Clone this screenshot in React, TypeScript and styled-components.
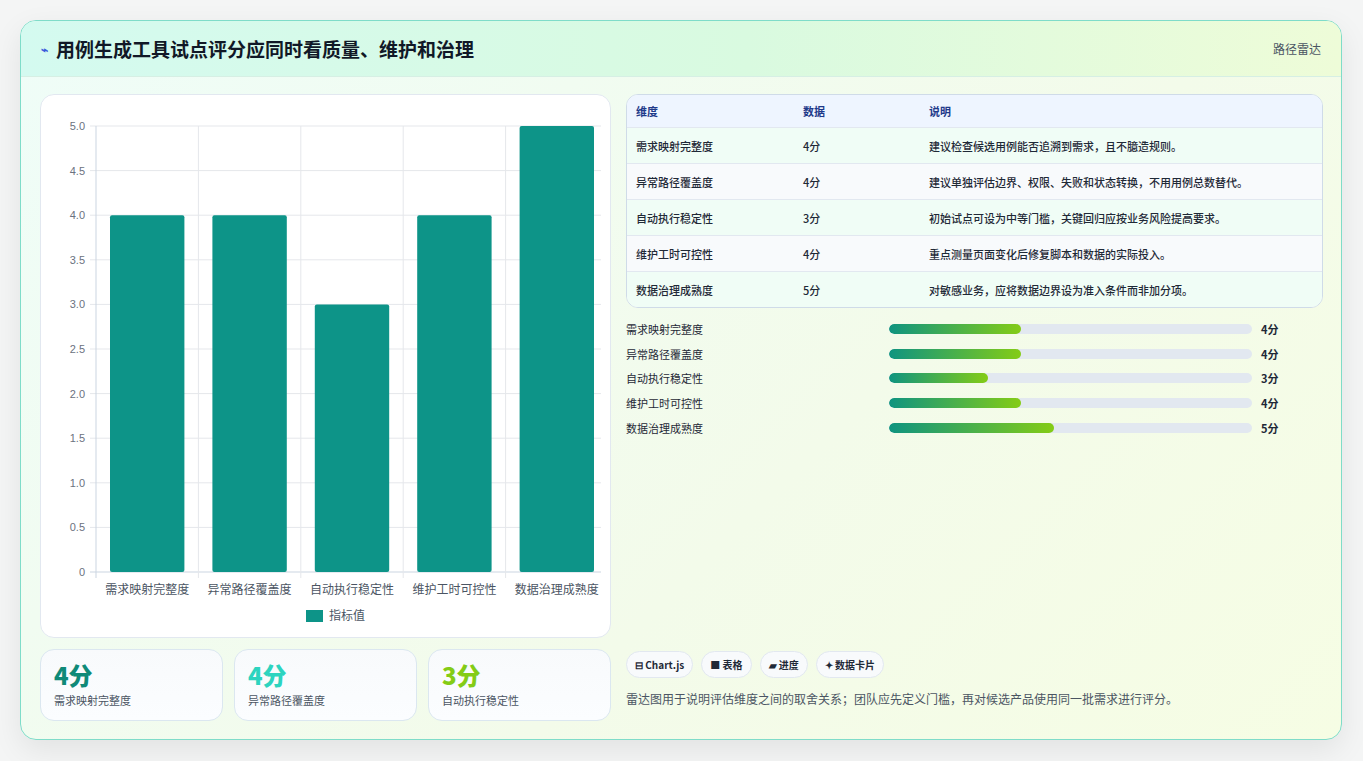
import styled, { createGlobalStyle } from "styled-components";

const GlobalStyle = createGlobalStyle`
  html, body { margin: 0; padding: 0; background: #f4f5f5; }
  body { font-family: "Noto Sans CJK SC", "Noto Sans", sans-serif; color: #1f2937; }
`;

const Page = styled.div`
  padding: 20px 21px 20px 20px;
  height: 761px;
  box-sizing: border-box;
`;

const Card = styled.div`
  height: 720px;
  box-sizing: border-box;
  border: 1px solid #7fdcc9;
  border-radius: 16px;
  background: linear-gradient(135deg, #effdf8 0%, #f3fbea 60%, #f6fde4 100%);
  box-shadow: 0 10px 30px rgba(0, 0, 0, 0.08);
  display: flex;
  flex-direction: column;
  overflow: hidden;
`;

const Header = styled.div`
  height: 55px;
  flex-shrink: 0;
  display: flex;
  align-items: center;
  justify-content: space-between;
  padding: 0 20px;
  background: linear-gradient(90deg, #d4faf0 0%, #d9fae0 55%, #eefcd8 100%);
  border-bottom: 1px solid #d6efe4;
`;

const Title = styled.h1`
  margin: 0;
  font-size: 19px;
  font-weight: 700;
  color: #111827;
  display: flex;
  align-items: center;
  gap: 8px;
`;

const Bolt = styled.span`
  color: #3b5bdb;
  font-size: 12px;
`;

const Tag = styled.span`
  font-size: 12px;
  color: #4b5563;
`;

const Body = styled.div`
  flex: 1;
  display: grid;
  grid-template-columns: 571px 1fr;
  gap: 15px;
  padding: 17px 18px 18px 19px;
  min-height: 0;
`;

const Col = styled.div`
  display: flex;
  flex-direction: column;
  gap: 11px;
  min-height: 0;
`;

const ChartCard = styled.div`
  flex: 1;
  background: #fff;
  border: 1px solid #e2e8f0;
  border-radius: 14px;
  padding: 8px 10px 10px 10px;
`;

const Stats = styled.div`
  display: grid;
  grid-template-columns: repeat(3, 1fr);
  gap: 11px;
  height: 74px;
`;

const Stat = styled.div`
  background: linear-gradient(180deg, #f8fafc, #fbfdff);
  border: 1px solid #dbe7f0;
  border-radius: 14px;
  padding: 10px 13px;
`;

const StatValue = styled.div<{ $color: string }>`
  font-size: 24px;
  font-weight: 800;
  color: ${(p) => p.$color};
  line-height: 30px;
`;

const StatLabel = styled.div`
  font-size: 11px;
  color: #4b5563;
  margin-top: 2px;
`;

const Table = styled.div`
  border: 1px solid #cfdbe8;
  border-radius: 12px;
  overflow: hidden;
  background: #fff;
`;

const Row = styled.div<{ $head?: boolean; $alt?: boolean }>`
  display: grid;
  grid-template-columns: 167px 126px 1fr;
  align-items: center;
  padding: 0 9px;
  height: ${(p) => (p.$head ? "32px" : "35px")};
  font-size: 11px;
  font-weight: ${(p) => (p.$head ? 600 : 500)};
  color: ${(p) => (p.$head ? "#1e3a8a" : "#1f2937")};
  background: ${(p) => (p.$head ? "#eef5ff" : p.$alt ? "#f8fafc" : "#f0fdf6")};
  border-top: ${(p) => (p.$head ? "none" : "1px solid #e2e8f0")};
`;

const Bars = styled.div`
  display: flex;
  flex-direction: column;
  margin-top: 9px;
`;

const BarRow = styled.div`
  display: grid;
  grid-template-columns: 263px 363px 1fr;
  align-items: center;
  gap: 0;
  height: 24.6px;
  font-size: 11px;
`;

const Track = styled.div`
  height: 10px;
  border-radius: 5px;
  background: #e2e8f0;
  overflow: hidden;
`;

const Fill = styled.div`
  height: 100%;
  border-radius: 5px;
  background: linear-gradient(90deg, #0f9480, #84cc16);
`;

const BarValue = styled.span`
  font-weight: 700;
  padding-left: 9px;
`;

const Spacer = styled.div`
  flex: 1;
`;

const Chips = styled.div`
  display: flex;
  gap: 8px;
`;

const Chip = styled.span`
  font-size: 10px;
  font-weight: 600;
  color: #1f2937;
  background: #f8fafc;
  border: 1px solid #e2e8f0;
  border-radius: 14px;
  padding: 5px 8px;
`;

const Note = styled.p`
  margin: 12px 0 14px;
  font-size: 12px;
  color: #4b5563;
`;

const rows = [
  { name: "需求映射完整度", v: 4, desc: "建议检查候选用例能否追溯到需求，且不臆造规则。" },
  { name: "异常路径覆盖度", v: 4, desc: "建议单独评估边界、权限、失败和状态转换，不用用例总数替代。" },
  { name: "自动执行稳定性", v: 3, desc: "初始试点可设为中等门槛，关键回归应按业务风险提高要求。" },
  { name: "维护工时可控性", v: 4, desc: "重点测量页面变化后修复脚本和数据的实际投入。" },
  { name: "数据治理成熟度", v: 5, desc: "对敏感业务，应将数据边界设为准入条件而非加分项。" },
];

const Chart = () => {
  const x0 = 45, x1 = 557, yTop = 23, yBot = 469;
  const cw = (x1 - x0) / 5;
  const ticks = [0, 0.5, 1, 1.5, 2, 2.5, 3, 3.5, 4, 4.5, 5];
  const y = (v: number) => yBot - (v / 5) * (yBot - yTop);
  return (
    <svg width="550" height="524" style={{ display: "block" }}>
      {ticks.map((t) => (
        <g key={t}>
          <line x1={x0 - 6} x2={x1} y1={y(t)} y2={y(t)} stroke={t === 0 ? "#cbd5e1" : "#e5e7eb"} />
          <text x={x0 - 11} y={y(t) + 4} fontSize="11" fill="#6b7280" textAnchor="end" fontFamily="Liberation Sans, sans-serif">
            {t === 0 ? "0" : t.toFixed(1)}
          </text>
        </g>
      ))}
      {[0, 1, 2, 3, 4, 5].map((i) => (
        <line key={i} x1={x0 + i * cw} x2={x0 + i * cw} y1={yTop} y2={yBot + 6} stroke={i === 0 ? "#cbd5e1" : "#e5e7eb"} />
      ))}
      {rows.map((r, i) => (
        <g key={r.name}>
          <rect x={x0 + i * cw + 14} y={y(r.v)} width={cw - 28} height={yBot - y(r.v)} rx="2" fill="#0d9488" />
          <text x={x0 + i * cw + cw / 2} y={yBot + 22} fontSize="12" fill="#4b5563" textAnchor="middle">
            {r.name}
          </text>
        </g>
      ))}
      <rect x="255" y="507" width="17" height="12" fill="#0d9488" />
      <text x="278" y="517" fontSize="12" fill="#4b5563">指标值</text>
    </svg>
  );
};

export default function App() {
  return (
    <>
      <GlobalStyle />
      <Page>
        <Card>
          <Header>
            <Title>
              <Bolt>⌁</Bolt>用例生成工具试点评分应同时看质量、维护和治理
            </Title>
            <Tag>路径雷达</Tag>
          </Header>
          <Body>
            <Col>
              <ChartCard>
                <Chart />
              </ChartCard>
              <Stats>
                <Stat>
                  <StatValue $color="#0f8a78">4分</StatValue>
                  <StatLabel>需求映射完整度</StatLabel>
                </Stat>
                <Stat>
                  <StatValue $color="#2dd4bf">4分</StatValue>
                  <StatLabel>异常路径覆盖度</StatLabel>
                </Stat>
                <Stat>
                  <StatValue $color="#84cc16">3分</StatValue>
                  <StatLabel>自动执行稳定性</StatLabel>
                </Stat>
              </Stats>
            </Col>
            <Col style={{ gap: 0 }}>
              <Table>
                <Row $head>
                  <span>维度</span>
                  <span>数据</span>
                  <span>说明</span>
                </Row>
                {rows.map((r, i) => (
                  <Row key={r.name} $alt={i % 2 === 1}>
                    <span>{r.name}</span>
                    <span>{r.v}分</span>
                    <span>{r.desc}</span>
                  </Row>
                ))}
              </Table>
              <Bars>
                {rows.map((r) => (
                  <BarRow key={r.name}>
                    <span>{r.name}</span>
                    <Track>
                      <Fill style={{ width: `${(r.v / 11) * 100}%` }} />
                    </Track>
                    <BarValue>{r.v}分</BarValue>
                  </BarRow>
                ))}
              </Bars>
              <Spacer />
              <Chips>
                <Chip>⊟ Chart.js</Chip>
                <Chip>■ 表格</Chip>
                <Chip>▰ 进度</Chip>
                <Chip>✦ 数据卡片</Chip>
              </Chips>
              <Note>雷达图用于说明评估维度之间的取舍关系；团队应先定义门槛，再对候选产品使用同一批需求进行评分。</Note>
            </Col>
          </Body>
        </Card>
      </Page>
    </>
  );
}
